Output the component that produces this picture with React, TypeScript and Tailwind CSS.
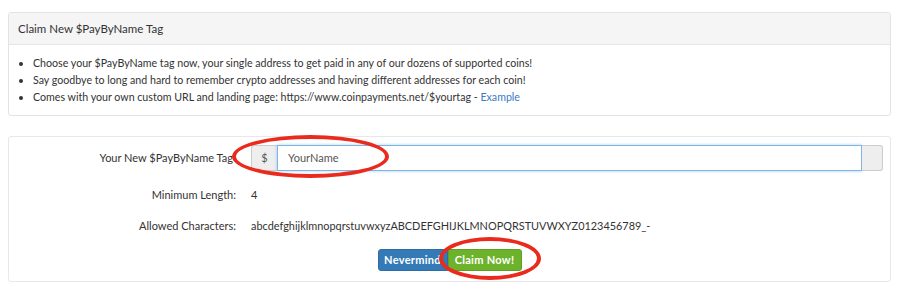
import React from 'react';

const font = { fontFamily: 'Lato, "Open Sans", sans-serif' };

export default function App() {
    return (
        <div className="relative w-[900px] h-[290px] bg-white text-[#333]" style={font}>
            <div className="px-[8px] pt-[12px]">
                {/* Info panel */}
                <div className="w-[883px] border border-[#e3e3e3] rounded-[3px] overflow-hidden">
                    <div className="h-[32px] bg-[#f5f5f5] border-b border-[#e6e6e6] flex items-center px-[9px] text-[11.5px]">
                        Claim New $PayByName Tag
                    </div>
                    <ul className="list-disc pl-[24px] pt-[9px] pb-[10px] text-[10.65px] leading-[17px]">
                        <li>Choose your $PayByName tag now, your single address to get paid in any of our dozens of supported coins!</li>
                        <li>Say goodbye to long and hard to remember crypto addresses and having different addresses for each coin!</li>
                        <li>
                            Comes with your own custom URL and landing page: https://www.coinpayments.net/$yourtag -{' '}
                            <span className="text-[#3b7bbf]">Example</span>
                        </li>
                    </ul>
                </div>

                {/* Claim form panel */}
                <div className="mt-[20px] w-[883px] border border-[#e8e8e8] rounded-[3px] pt-[8px] pb-[10px] text-[11px]">
                    <div className="flex items-center h-[26px]">
                        <div className="w-[242px] pr-[18px] text-right">Your New $PayByName Tag</div>
                        <div className="flex flex-1 h-[26px] pr-[7px]">
                            <div className="w-[26px] bg-[#eee] border border-[#ccc] border-r-0 rounded-l-[3px] flex items-center justify-center text-[#555]">$</div>
                            <div className="flex-1 border border-[#80b3e6] shadow-[0_0_3px_rgba(102,175,233,0.6)] flex items-center px-[10px] text-[#555]">YourName</div>
                            <div className="w-[21px] bg-[#eee] border border-[#ccc] border-l-0 rounded-r-[3px]"></div>
                        </div>
                    </div>
                    <div className="flex items-center h-[26px] mt-[11px]">
                        <div className="w-[242px] pr-[15px] text-right">Minimum Length:</div>
                        <div>4</div>
                    </div>
                    <div className="flex items-center h-[26px] mt-[5px]">
                        <div className="w-[242px] pr-[15px] text-right">Allowed Characters:</div>
                        <div className="text-[10.9px]">abcdefghijklmnopqrstuvwxyzABCDEFGHIJKLMNOPQRSTUVWXYZ0123456789_-</div>
                    </div>
                    <div className="flex justify-center mt-[10px]">
                        <button className="w-[70px] h-[22px] bg-[#337ab7] border border-[#2e6da4] rounded-l-[3px] text-white font-bold text-[11px] tracking-[0.3px]">
                            Nevermind
                        </button>
                        <button className="w-[74px] h-[22px] bg-[#6cb32b] border border-[#5fa024] rounded-r-[3px] text-white font-bold text-[11px] tracking-[0.3px]">
                            Claim Now!
                        </button>
                    </div>
                </div>
            </div>

            {/* Red annotation ellipses */}
            <div className="absolute left-[232px] top-[135px] w-[157px] h-[43px] rounded-[50%] border-[4px] border-[#ea2a1c] pointer-events-none"></div>
            <div className="absolute left-[439px] top-[237px] w-[102px] h-[43px] rounded-[50%] border-[4px] border-[#ea2a1c] pointer-events-none"></div>
        </div>
    );
}
